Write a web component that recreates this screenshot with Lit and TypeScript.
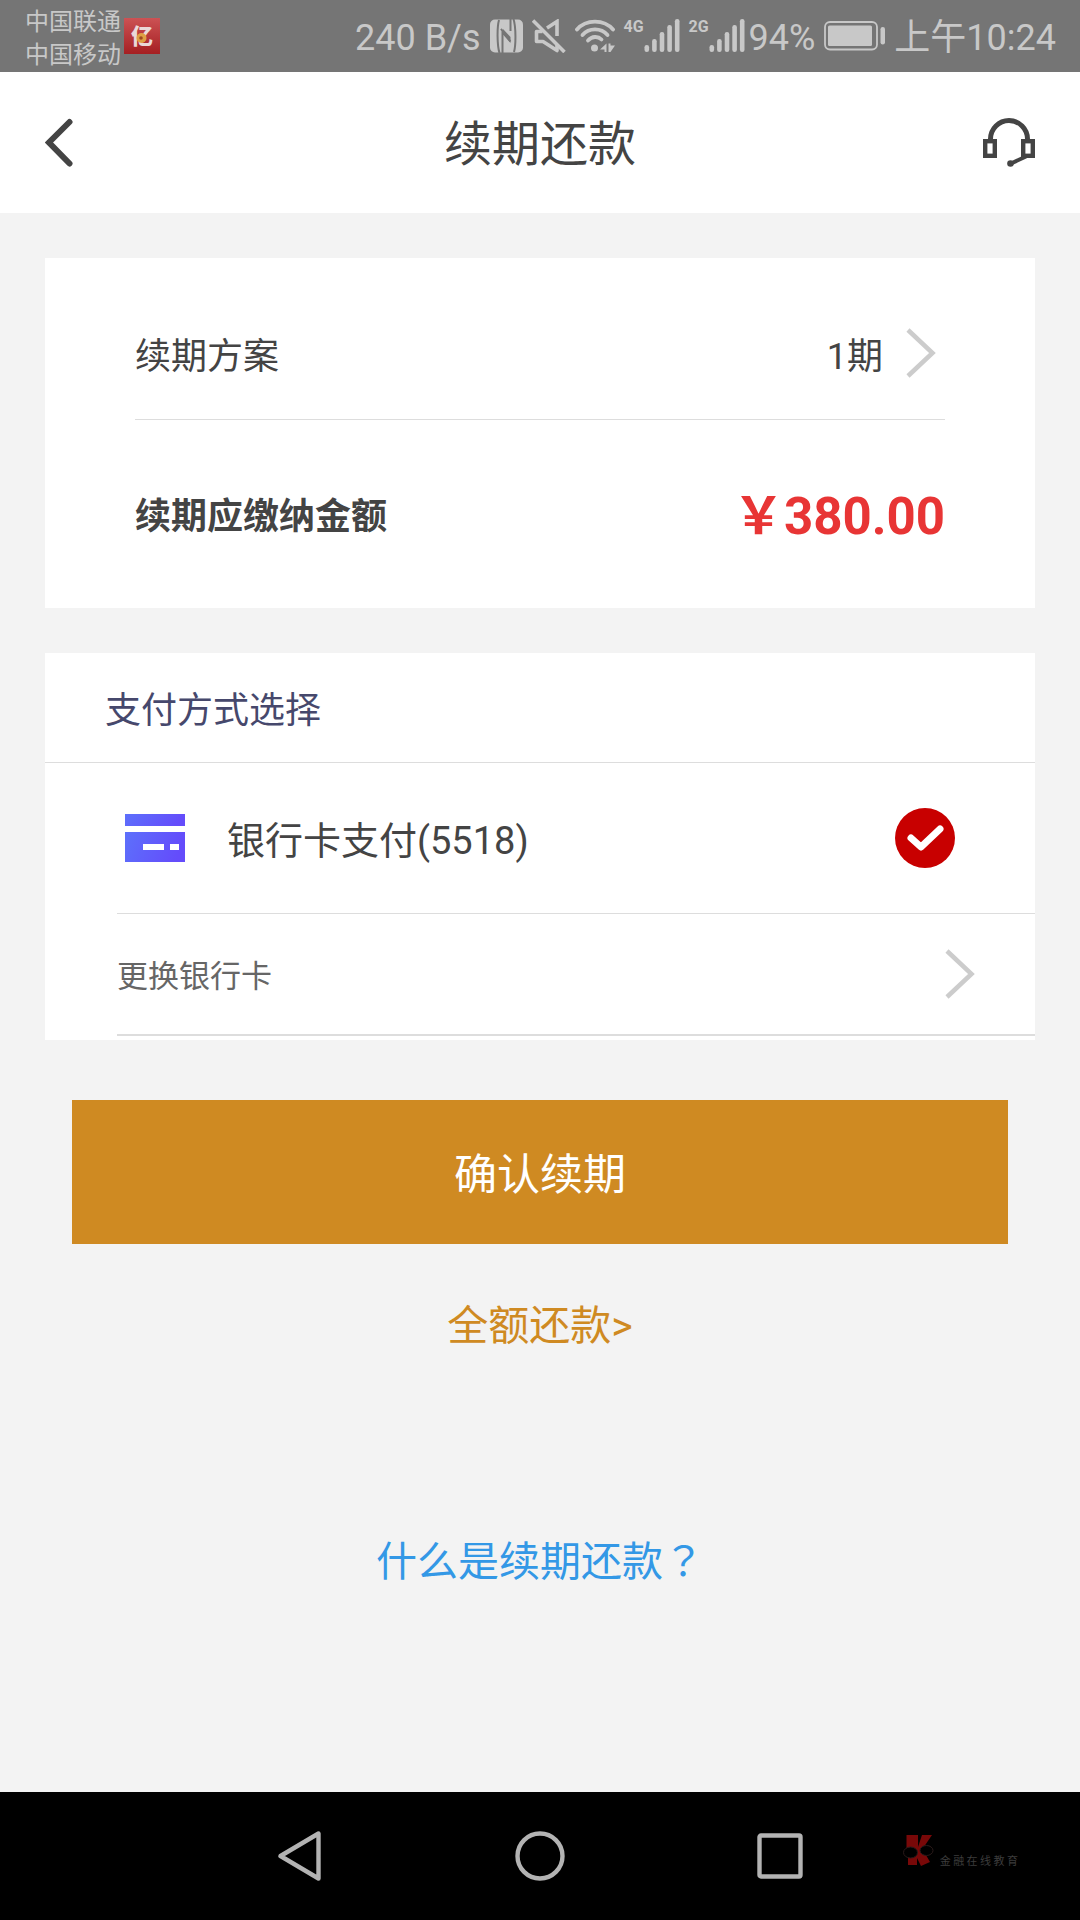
import { LitElement, html, css, svg } from "lit";
import { customElement, property, state } from "lit/decorators.js";

/** Mobile network strength: a small generation label beside five bars. */
@customElement("signal-bars")
class SignalBars extends LitElement {
  @property() label = "4G";

  static styles = css`
    :host {
      display: flex;
      align-items: flex-start;
      height: 34px;
    }
    .label {
      width: 20px;
      font: bold 16px/16px Roboto, sans-serif;
    }
    .bars {
      display: block;
      fill: currentColor;
    }
  `;

  render() {
    const heights = [7, 13, 20, 27, 33];
    return html`
      <span class="label">${this.label}</span>
      <svg class="bars" width="36" height="34" viewBox="0 0 36 34" aria-hidden="true">
        ${heights.map(
          (h, i) => svg`<rect x=${0.5 + i * 7.6} y=${33 - h} width="4.6" height=${h} rx="2.2" />`
        )}
      </svg>
    `;
  }
}

/** System status strip at the top of the screen. */
@customElement("status-bar")
class StatusBar extends LitElement {
  static styles = css`
    :host {
      display: flex;
      justify-content: space-between;
      align-items: center;
      height: 72px;
      padding: 0 24px 0 25px;
      background: #757575;
      color: #c8c8c8;
      font: 36px/40px Roboto, "Noto Sans CJK SC", sans-serif;
      white-space: nowrap;
    }
    .left,
    .right,
    .level {
      display: flex;
      align-items: center;
    }
    .left {
      gap: 3px;
    }
    .right {
      gap: 9px;
    }
    .level {
      gap: 4px;
    }
    .text {
      padding-top: 4px;
    }
    .carriers {
      padding-top: 5px;
      font-size: 24px;
      line-height: 33px;
    }
    .icon {
      display: block;
      flex: none;
    }
    .logo {
      font: 900 22px "Noto Sans CJK SC", sans-serif;
    }
  `;

  render() {
    return html`
      <div class="left">
        <div class="carriers">
          <div>中国联通</div>
          <div>中国移动</div>
        </div>
        <svg class="icon" width="36" height="36" viewBox="0 0 36 36" overflow="visible" aria-hidden="true">
          <defs>
            <linearGradient id="red" x1="0" y1="0" x2="0" y2="1">
              <stop offset="0" stop-color="#cc5254" />
              <stop offset="1" stop-color="#a51f22" />
            </linearGradient>
          </defs>
          <rect width="36" height="36" fill="url(#red)" />
          <text class="logo" x="18" y="26" text-anchor="middle" fill="#ead9d8">亿</text>
          <circle cx="17.500" cy="20" r="5" fill="#dfa044" />
          <circle cx="17" cy="20" r="1.800" fill="#a04a20" />
        </svg>
      </div>
      <div class="right">
        <span class="text">240 B/s</span>
        <svg class="icon" width="33" height="34" viewBox="0 0 33 34" fill="currentColor" aria-hidden="true">
          <rect y="0.500" width="33" height="33" rx="5" />
          <g fill="none" stroke="#757575" stroke-width="2">
            <path d="M9 1 C7 8 7 26 9.500 34" />
            <path d="M23.500 0 C26 8 26 26 24 33" />
            <path d="M12.500 34 V12 L20.500 22.500 M20.500 0 V12 M12.500 12 L11 10" />
          </g>
          <path d="M13 10 L20.500 18 V24 L13 15.500 Z" fill="#757575" />
        </svg>
        <svg class="icon" width="34" height="34" viewBox="0 0 34 34" fill="none" stroke="currentColor" stroke-width="3.600" aria-hidden="true">
          <path d="M1 1.500 L32.500 33" />
          <path d="M10.500 12.500 H4.500 V22.500 H11 L25 31.500 V25" stroke-linejoin="round" />
          <path d="M15 9 L25 2.500 V17" />
        </svg>
        <svg class="icon" width="40" height="34" viewBox="0 0 40 34" fill="none" stroke="currentColor" stroke-width="3.800" aria-hidden="true">
          <path d="M2 10.500 C11 0 29 0 38 10.500" stroke-linecap="round" />
          <path d="M7.500 16 C14 8.500 26 8.500 32.500 16" stroke-linecap="round" />
          <path d="M13 21.500 C17 17 23 17 26.500 20.500" stroke-linecap="round" />
          <circle cx="19.500" cy="29" r="3.500" fill="currentColor" stroke="none" />
          <path d="M31.500 24.500 V33 H29.500 V30.500 H25 Z M33.500 24.500 H35.500 V26.500 H40 L35.500 33 H33.500 Z" fill="currentColor" stroke="none" />
        </svg>
        <signal-bars label="4G"></signal-bars>
        <div class="level">
          <signal-bars label="2G"></signal-bars>
          <span class="text">94%</span>
        </div>
        <svg class="icon" width="61" height="30" viewBox="0 0 61 30" aria-hidden="true">
          <rect x="1" y="1" width="52" height="27.500" rx="5" fill="none" stroke="currentColor" stroke-width="1.800" />
          <rect x="4" y="4.500" width="44" height="20.500" rx="1.500" fill="currentColor" />
          <rect x="56.500" y="6" width="4.500" height="17.500" rx="2.200" fill="currentColor" />
        </svg>
        <span class="text">上午10:24</span>
      </div>
    `;
  }
}

/** Back, home and recents keys, with the publisher's mark at the side. */
@customElement("nav-bar")
class NavBar extends LitElement {
  static styles = css`
    :host {
      display: grid;
      align-items: center;
      height: 128px;
      background: #000;
    }
    .keys {
      grid-area: 1 / 1;
      display: flex;
      justify-content: center;
      gap: 190px;
    }
    .key {
      display: block;
      padding: 0;
      border: 0;
      background: none;
    }
    .glyph {
      display: block;
      fill: none;
      stroke: #b3b3b3;
      stroke-width: 4.4;
      stroke-linejoin: round;
    }
    .mark {
      grid-area: 1 / 1;
      justify-self: end;
      display: flex;
      align-items: flex-end;
      gap: 6px;
      padding: 0 62px 10px 0;
      color: #3c3c3c;
      font: 11px/14px "Noto Sans CJK SC", sans-serif;
    }
    .emblem {
      display: block;
    }
  `;

  render() {
    return html`
      <div class="keys">
        <button class="key" aria-label="返回">
          <svg class="glyph" width="50" height="50" viewBox="0 0 50 50">
            <path d="M43.500 2.500 V47.500 L5.500 25 Z" />
          </svg>
        </button>
        <button class="key" aria-label="主屏幕">
          <svg class="glyph" width="50" height="50" viewBox="0 0 50 50">
            <circle cx="25" cy="25" r="22.500" />
          </svg>
        </button>
        <button class="key" aria-label="最近任务">
          <svg class="glyph" width="50" height="50" viewBox="0 0 50 50">
            <rect x="4.500" y="4.500" width="41" height="41" rx="1.500" />
          </svg>
        </button>
      </div>
      <div class="mark">
        <svg class="emblem" width="31" height="32" viewBox="0 0 31 32" aria-hidden="true">
          <path d="M3.500 0 H15 V12 L19 0 H29 L19.500 14 L27 27 L18 31 L14 23 V30 H5 V23 L3.500 13 Z" fill="#780808" />
          <ellipse cx="7.500" cy="17.500" rx="7" ry="5.500" fill="#000" stroke="#2a1a1a" />
          <ellipse cx="23.500" cy="15.500" rx="6.500" ry="5" fill="#000" stroke="#2a1a1a" />
        </svg>
        <span>金 融 在 线 教 育</span>
      </div>
    `;
  }
}

@customElement("app-root")
class AppRoot extends LitElement {
  @state() private method = "5518";

  static styles = css`
    :host {
      display: flex;
      flex-direction: column;
      min-height: 100vh;
      background: #f3f3f3;
      color: #444;
      font: 36px/48px Roboto, "Noto Sans CJK SC", sans-serif;
    }
    .header {
      display: grid;
      grid-template-columns: 52px 1fr 52px;
      align-items: center;
      height: 141px;
      padding: 0 45px;
      background: #fff;
    }
    .title {
      margin: 0;
      padding-top: 5px;
      font-size: 48px;
      line-height: 64px;
      font-weight: 400;
      text-align: center;
    }
    .plain {
      display: block;
      padding: 0;
      border: 0;
      background: none;
      color: inherit;
      font: inherit;
      text-align: left;
    }
    .icon {
      display: block;
      flex: none;
    }
    .content {
      flex: 1;
      display: flex;
      flex-direction: column;
      padding: 45px 45px 0;
    }
    .card {
      background: #fff;
    }
    .plan {
      padding: 28px 90px 0;
      margin-bottom: 45px;
    }
    .row {
      display: flex;
      align-items: center;
      justify-content: space-between;
      box-sizing: border-box;
      width: 100%;
    }
    .text {
      padding-top: 5px;
    }
    .term {
      height: 134px;
      padding-right: 9px;
      border-bottom: 1px solid #ddd;
    }
    .term .text {
      padding-top: 9px;
    }
    .value {
      display: flex;
      align-items: center;
      gap: 23px;
    }
    .due {
      height: 188px;
      font-weight: 700;
    }
    .amount {
      color: #e83535;
      font-size: 51px;
      line-height: 64px;
    }
    .heading {
      margin: 0;
      padding: 34px 60px 27px;
      border-bottom: 1px solid #ddd;
      color: #46486c;
      font-size: 36px;
      line-height: 48px;
      font-weight: 400;
    }
    .methods {
      padding: 0 0 4px 72px;
    }
    .method {
      height: 151px;
      padding: 0 80px 0 8px;
      border-bottom: 1px solid #ddd;
      font-size: 38px;
    }
    .name {
      flex: 1;
      padding-left: 42px;
    }
    .choice {
      display: grid;
    }
    .radio {
      grid-area: 1 / 1;
      appearance: none;
      width: 60px;
      height: 60px;
      margin: 0;
      border-radius: 50%;
      background: #c80000;
    }
    .tick {
      grid-area: 1 / 1;
      pointer-events: none;
    }
    .change {
      height: 122px;
      padding-right: 60px;
      border-bottom: 2px solid #ddd;
      color: #666;
      font-size: 31px;
    }
    .confirm {
      height: 144px;
      margin: 60px 27px 0;
      padding: 5px 0 0;
      border: 0;
      background: #cf8a22;
      color: #fff;
      font: inherit;
      font-size: 43px;
    }
    .link {
      align-self: center;
      font-size: 41px;
      line-height: 60px;
      text-decoration: none;
    }
    .full {
      margin-top: 52px;
      color: #cf8a22;
    }
    .help {
      margin: 176px 0 60px;
      color: #3398e6;
    }
    .query {
      font-family: "Noto Sans CJK TC", sans-serif;
      line-height: 1;
    }
  `;

  private chevron() {
    return html`
      <svg class="icon" width="30" height="50" viewBox="0 0 30 50" fill="none" stroke="#ccc" stroke-width="4.500" aria-hidden="true">
        <path d="M2 2 L26.500 25 L2 48" />
      </svg>
    `;
  }

  render() {
    return html`
      <status-bar></status-bar>
      <header class="header">
        <button class="plain" aria-label="返回">
          <svg class="icon" width="30" height="50" viewBox="0 0 30 50" fill="none" stroke="#444" stroke-width="6" stroke-linecap="round">
            <path d="M24.500 4 L4 24.500 L24.500 45.500" />
          </svg>
        </button>
        <h1 class="title">续期还款</h1>
        <button class="plain" aria-label="客服">
          <svg class="icon" width="52" height="50" viewBox="0 0 52 50" fill="none" stroke="#444">
            <path d="M7.500 22 V21 A18.500 18.500 0 0 1 44.500 21 V22" stroke-width="5" />
            <rect x="2.200" y="23.200" width="9.600" height="14.600" stroke-width="4.400" />
            <rect x="40.200" y="23.200" width="9.600" height="14.600" stroke-width="4.400" />
            <path d="M43 38.500 L28 45.500" stroke-width="4" />
            <circle cx="27.500" cy="45.500" r="3.300" fill="#444" stroke="none" />
          </svg>
        </button>
      </header>
      <main class="content">
        <section class="card plan">
          <button class="plain row term">
            <span class="text">续期方案</span>
            <span class="value"><span class="text">1期</span>${this.chevron()}</span>
          </button>
          <div class="row due">
            <span class="text">续期应缴纳金额</span>
            <span class="text amount">￥380.00</span>
          </div>
        </section>
        <section class="card">
          <h2 class="heading">支付方式选择</h2>
          <div class="methods">
            <label class="row method" for="card">
              <svg class="icon" width="60" height="48" viewBox="0 0 60 48" aria-hidden="true">
                <defs>
                  <linearGradient id="violet" x1="0" y1="0" x2="1" y2="0.200">
                    <stop offset="0" stop-color="#5d70fb" />
                    <stop offset="1" stop-color="#644cfb" />
                  </linearGradient>
                </defs>
                <rect width="60" height="12" fill="url(#violet)" />
                <rect y="18" width="60" height="30" fill="url(#violet)" />
                <rect x="18" y="30" width="21" height="6" fill="#fff" />
                <rect x="45" y="30" width="9" height="6" fill="#fff" />
              </svg>
              <span class="text name">银行卡支付(5518)</span>
              <span class="choice">
                <input
                  class="radio"
                  type="radio"
                  id="card"
                  name="method"
                  value="5518"
                  .checked=${this.method === "5518"}
                  @change=${() => (this.method = "5518")}
                />
                <svg class="tick" width="60" height="60" viewBox="0 0 60 60" fill="none" stroke="#fff" stroke-width="7" stroke-linecap="round" stroke-linejoin="round" aria-hidden="true">
                  <path d="M16 30 L26 39 L45 21" />
                </svg>
              </span>
            </label>
            <button class="plain row change">
              <span class="text">更换银行卡</span>
              ${this.chevron()}
            </button>
          </div>
        </section>
        <button class="confirm">确认续期</button>
        <a class="link full" href="#full">全额还款&gt;</a>
        <a class="link help" href="#help">什么是续期还款<span class="query">？</span></a>
      </main>
      <nav-bar></nav-bar>
    `;
  }
}
